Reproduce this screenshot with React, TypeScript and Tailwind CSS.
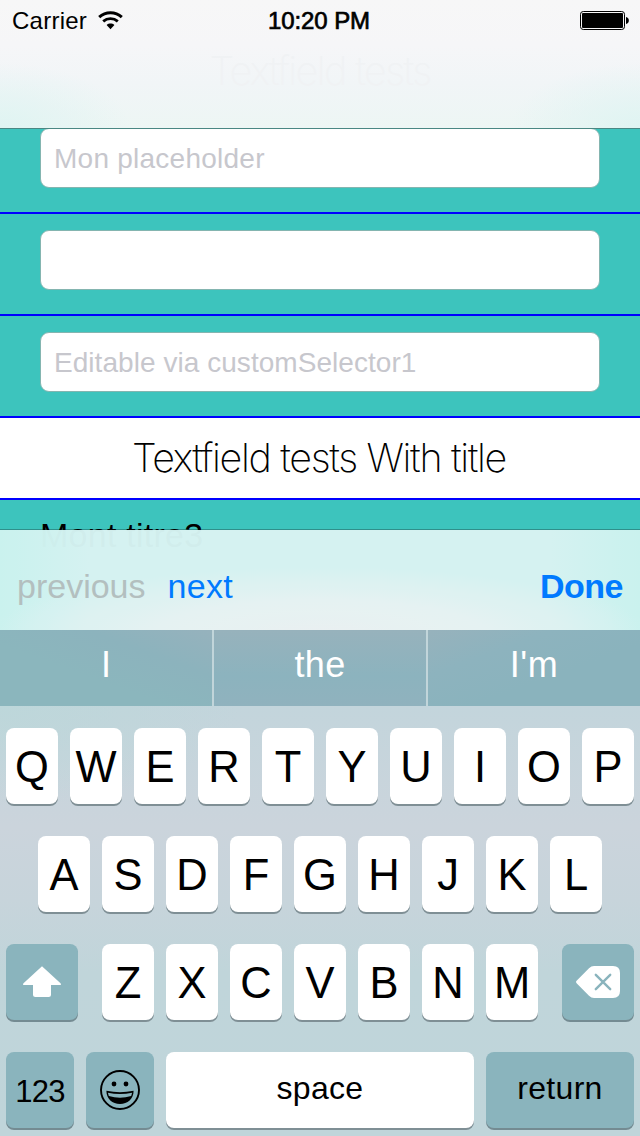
import type { ReactNode } from "react";

const letterKey =
  "flex h-[76px] w-[52px] justify-center rounded-[8px] bg-white text-[43.5px] leading-[79px] text-black shadow-[0_2px_0_#7f8f95]";
const darkKey =
  "flex h-[76px] items-center justify-center rounded-[8px] bg-[#8ab4bd] text-black shadow-[0_2px_0_#748b92]";

function Letters({ keys }: { keys: string }) {
  return (
    <div className="flex gap-3">
      {keys.split("").map((k) => (
        <button key={k} className={letterKey}>
          {k}
        </button>
      ))}
    </div>
  );
}

function Field({ children }: { children?: ReactNode }) {
  return (
    <div className="mx-10 h-[60px] rounded-[9px] border border-[#84b5b0] bg-white pl-[13px] text-[28px] leading-[60px] text-[#c7c7cd]">
      {children}
    </div>
  );
}

function WifiIcon() {
  return (
    <svg className="ml-[11px] h-[19px] w-[25px]" viewBox="0 0 25 19" fill="none">
      <path d="M1.2 6.2C7.6.3 17.4.3 23.8 6.2" stroke="#000" strokeWidth="3" />
      <path d="M5.2 10.4c4.2-3.7 10.4-3.7 14.6 0" stroke="#000" strokeWidth="2.8" />
      <path d="M8.6 14c2.3-1.9 5.5-1.9 7.8 0l-3.9 4.3z" fill="#000" />
    </svg>
  );
}

function BatteryIcon() {
  return (
    <svg className="h-[20px] w-[50px]" viewBox="0 0 50 20">
      <rect x="0.5" y="0.5" width="44" height="18" rx="2.8" fill="none" stroke="#000" strokeWidth="1" />
      <rect x="2" y="2" width="41" height="15" rx="1" fill="#000" />
      <path d="M46 6c3.8.6 3.8 6.4 0 7z" fill="#000" />
    </svg>
  );
}

export default function App() {
  return (
    <div className="flex h-[1136px] w-[640px] flex-col overflow-hidden bg-[#d5f2f1] font-['Liberation_Sans',sans-serif] text-black">
      <header className="h-[129px] shrink-0 border-b border-[#4a8783] bg-[radial-gradient(ellipse_130px_65px_at_0%_100%,#dff4f2,transparent),radial-gradient(ellipse_130px_65px_at_100%_100%,#dff4f2,transparent),linear-gradient(#f7f7f7_0%,#f6f6f8_35%,#f1f5f7_65%,#edf6f4_100%)]">
        <div className="grid h-[41px] grid-cols-3 text-[24px] leading-[41px]">
          <div className="flex items-center pl-3">
            <span className="tracking-[0.25px]">Carrier</span>
            <WifiIcon />
          </div>
          <div className="pr-[2px] text-center tracking-[-0.1px] [-webkit-text-stroke:0.7px_#000]">10:20 PM</div>
          <div className="flex items-center justify-end pr-[10px]">
            <BatteryIcon />
          </div>
        </div>
        <h2 className="pt-[6px] text-center font-['Inter',sans-serif] text-[39.5px] leading-[48px] font-extralight tracking-[-1.6px] text-[#f0f2f4]">
          Textfield tests
        </h2>
      </header>

      <main className="flex h-[401px] shrink-0 flex-col bg-[#3dc4bd]">
        <div className="h-[85px] shrink-0 overflow-hidden border-b-2 border-[#0000ff]">
          <div className="-mt-px">
            <Field>
              <span className="tracking-[0.25px]">Mon placeholder</span>
            </Field>
          </div>
        </div>
        <div className="h-[102px] shrink-0 border-b-2 border-[#0000ff] pt-4">
          <Field />
        </div>
        <div className="h-[102px] shrink-0 border-b-2 border-[#0000ff] pt-4">
          <Field>
            <span className="tracking-[0.05px]">Editable via customSelector1</span>
          </Field>
        </div>
        <h2 className="h-[82px] shrink-0 border-b-2 border-[#0000ff] bg-white pr-[2px] text-center font-['Inter',sans-serif] text-[39.5px] leading-[81px] font-extralight tracking-[-1.35px]">
          Textfield tests With title
        </h2>
        <div className="h-[30px] shrink-0 border-b border-[#2f8f8b] pl-[40px] text-[34px] leading-[70px] tracking-[0.25px]">
          Mont titre3
        </div>
      </main>

      <div className="relative h-[100px] shrink-0">
        <div className="absolute inset-0 bg-[#d5f2f1] opacity-[.98]" />
        <div className="absolute inset-0 bg-[radial-gradient(ellipse_52%_70%_at_50%_105%,#edeff2,#e7f3f3_50%,transparent),linear-gradient(90deg,#c9f3ee,transparent_14%,transparent_86%,#c9f3ee)] opacity-90" />
        <div className="relative flex h-full pr-4 pl-[17px] text-[34px] leading-[112px] text-[#007aff]">
          <span className="text-[#b3bfbf]">previous</span>
          <span className="ml-[22px] tracking-[0.3px]">next</span>
          <span className="ml-auto pr-px font-bold tracking-[-0.5px]">Done</span>
        </div>
      </div>

      <div className="grid h-[76px] shrink-0 grid-cols-[212px_212px_212px] gap-[2px] bg-[#c1d5da] text-center text-[36px] leading-[70px] text-white">
        <div className="bg-[linear-gradient(20deg,#8bb6bd_40%,#8cb3bd_70%,#96b2bd)]">I</div>
        <div className="bg-[linear-gradient(#97b2bc,#8cb3be_60%,#90b2be)] tracking-[0.3px]">the</div>
        <div className="bg-[linear-gradient(-20deg,#8ab3bd_40%,#8db3be_70%,#97b2bc)] tracking-[0.5px]">I'm</div>
      </div>

      <div className="flex flex-1 flex-col gap-8 bg-[radial-gradient(ellipse_240px_100px_at_0%_0%,#bdd7da,transparent),linear-gradient(#c3d5dc_0%,#cbd4dc_28%,#c7d4db_45%,#c0d5da_62%,#bfd5da_100%)] px-[6px] pt-[22px]">
        <Letters keys="QWERTYUIOP" />
        <div className="pl-8">
          <Letters keys="ASDFGHJKL" />
        </div>
        <div className="flex justify-between">
          <button className={`${darkKey} w-[72px]`} aria-label="Shift">
            <svg className="h-[34px] w-[40px]" viewBox="0 0 40 34">
              <path d="M20 1.2 38.5 18.2q1.2 1.8-.6 1.8H29v9.5q0 2.5-2.5 2.5h-13q-2.5 0-2.5-2.5V20H2.1q-1.8 0-.6-1.8z" fill="#fff" />
            </svg>
          </button>
          <Letters keys="ZXCVBNM" />
          <button className={`${darkKey} w-[72px]`} aria-label="Delete">
            <svg className="h-[32px] w-[44px]" viewBox="0 0 44 32">
              <path d="M.6 14.8 13 2.3Q15.3 0 18 0h19q7 0 7 7v18q0 7-7 7H18q-2.7 0-5-2.3L.6 17.2q-1.1-1.2 0-2.4z" fill="#fff" />
              <path d="m19.8 8.8 14.4 14.4m0-14.4-14.4 14.4" stroke="#8ab4bd" strokeWidth="2.4" strokeLinecap="round" />
            </svg>
          </button>
        </div>
        <div className="flex gap-3">
          <button className={`${darkKey} w-[68px] text-[31px] leading-[76px] tracking-[-0.7px]`}>
            <span className="h-[76px] leading-[79px]">123</span>
          </button>
          <button className={`${darkKey} w-[68px]`} aria-label="Emoji">
            <svg className="h-[40px] w-[40px]" viewBox="0 0 40 40">
              <circle cx="20" cy="20" r="19" fill="none" stroke="#000" strokeWidth="1.9" />
              <circle cx="14" cy="14" r="2.4" />
              <circle cx="26" cy="14" r="2.4" />
              <path d="M6.4 20.8Q20 23.6 33.6 20.8C33.6 29 27.6 34 20 34S6.4 29 6.4 20.8z" />
              <path d="M7.9 22.7Q20 25.2 32.1 22.7l-.9 3.4Q20 29.2 8.8 26.1z" fill="#8ab4bd" />
            </svg>
          </button>
          <button className="h-[76px] w-[308px] rounded-[8px] bg-white text-[32px] leading-[73px] tracking-[0.3px] shadow-[0_2px_0_#7f8f95]">
            <span className="block h-[76px]">space</span>
          </button>
          <button className={`${darkKey} w-[148px] text-[32px]`}>
            <span className="h-[76px] leading-[73px] tracking-[0.3px]">return</span>
          </button>
        </div>
      </div>
    </div>
  );
}
